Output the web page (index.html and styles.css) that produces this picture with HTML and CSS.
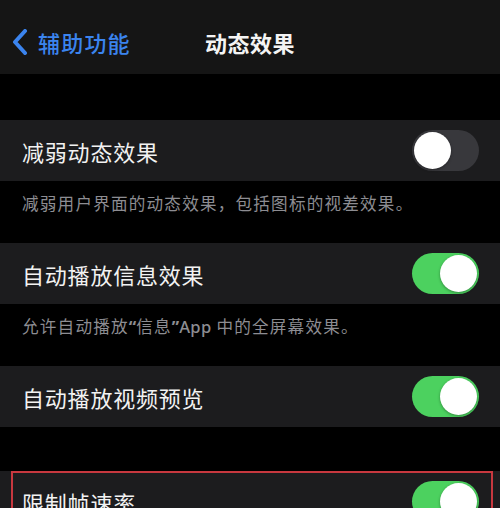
FILE: index.html
```html
<!DOCTYPE html>
<html lang="zh-CN">
<head>
<meta charset="utf-8">
<link rel="stylesheet" href="styles.css">
</head>
<body>
<div class="screen">
  <header class="nav">
    <div class="back">
      <svg class="chev" width="18" height="26" viewBox="0 0 18 26"><path d="M14 2 L4 13 L14 24" fill="none" stroke="#3b84ee" stroke-width="4" stroke-linecap="round" stroke-linejoin="round"/></svg>
      <span class="back-text">辅助功能</span>
    </div>
    <div class="title">动态效果</div>
    <div></div>
  </header>
  <div class="gap gap-top"></div>
  <div class="row"><span class="label">减弱动态效果</span><span class="toggle off"><span class="knob"></span></span></div>
  <div class="desc">减弱用户界面的动态效果，包括图标的视差效果。</div>
  <div class="row"><span class="label">自动播放信息效果</span><span class="toggle on"><span class="knob"></span></span></div>
  <div class="desc">允许自动播放<span class="q">“</span>信息<span class="q">”</span><span class="latin">App</span> 中的全屏幕效果。</div>
  <div class="row"><span class="label">自动播放视频预览</span><span class="toggle on"><span class="knob"></span></span></div>
  <div class="gap gap-mid"></div>
  <div class="row row-last"><span class="label">限制帧速率</span><span class="toggle on"><span class="knob"></span></span><span class="highlight"></span></div>
</div>
</body>
</html>
```
FILE: styles.css
```css
html, body {
  margin: 0;
  padding: 0;
  background: #000;
}
body {
  font-family: "Noto Sans CJK SC", "Noto Sans", sans-serif;
}
.screen {
  width: 500px;
  height: 508px;
  overflow: hidden;
  background: #000;
}
.nav {
  height: 74px;
  background: #151515;
  display: grid;
  grid-template-columns: 1fr auto 1fr;
  align-items: center;
  padding-top: 10px;
  box-sizing: border-box;
}
.back {
  display: flex;
  align-items: center;
  padding-left: 11px;
  gap: 9px;
}
.chev {
  display: block;
}
.back-text {
  color: #3b84ee;
  font-size: 22px;
  font-weight: 500;
  letter-spacing: 1.2px;
}
.title {
  color: #f4f4f4;
  font-size: 22px;
  font-weight: 600;
  letter-spacing: 0.5px;
}
.gap-top {
  height: 46px;
}
.gap-mid {
  height: 44px;
}
.row {
  height: 61px;
  background: #1c1c1e;
  display: flex;
  align-items: center;
  justify-content: space-between;
  padding: 0 21px 0 22px;
  box-sizing: border-box;
}
.row-last {
  position: relative;
}
.label {
  color: #f2f2f2;
  font-size: 22px;
  letter-spacing: 0.8px;
}
.desc {
  height: 62px;
  box-sizing: border-box;
  padding: 9px 22px 0;
  color: #8d8d92;
  font-size: 16.6px;
  line-height: 26px;
  letter-spacing: 1.2px;
}
.q {
  font-family: "Noto Sans", sans-serif;
  font-weight: 700;
  letter-spacing: 0;
}
.latin {
  font-family: "Noto Sans", sans-serif;
  font-weight: 500;
  letter-spacing: 0.3px;
}
.toggle {
  width: 67px;
  height: 41px;
  border-radius: 21px;
  display: flex;
  align-items: center;
  padding: 0 2px;
  box-sizing: border-box;
}
.toggle.off {
  background: #38383c;
  justify-content: flex-start;
}
.toggle.on {
  background: #4cd15f;
  justify-content: flex-end;
}
.knob {
  width: 37px;
  height: 37px;
  border-radius: 50%;
  background: #fff;
  box-shadow: 0 1px 3px rgba(0,0,0,0.35);
}
.highlight {
  position: absolute;
  left: 11px;
  top: 0;
  width: 482px;
  height: 80px;
  border: 2px solid #c8383f;
  box-sizing: border-box;
}
```
